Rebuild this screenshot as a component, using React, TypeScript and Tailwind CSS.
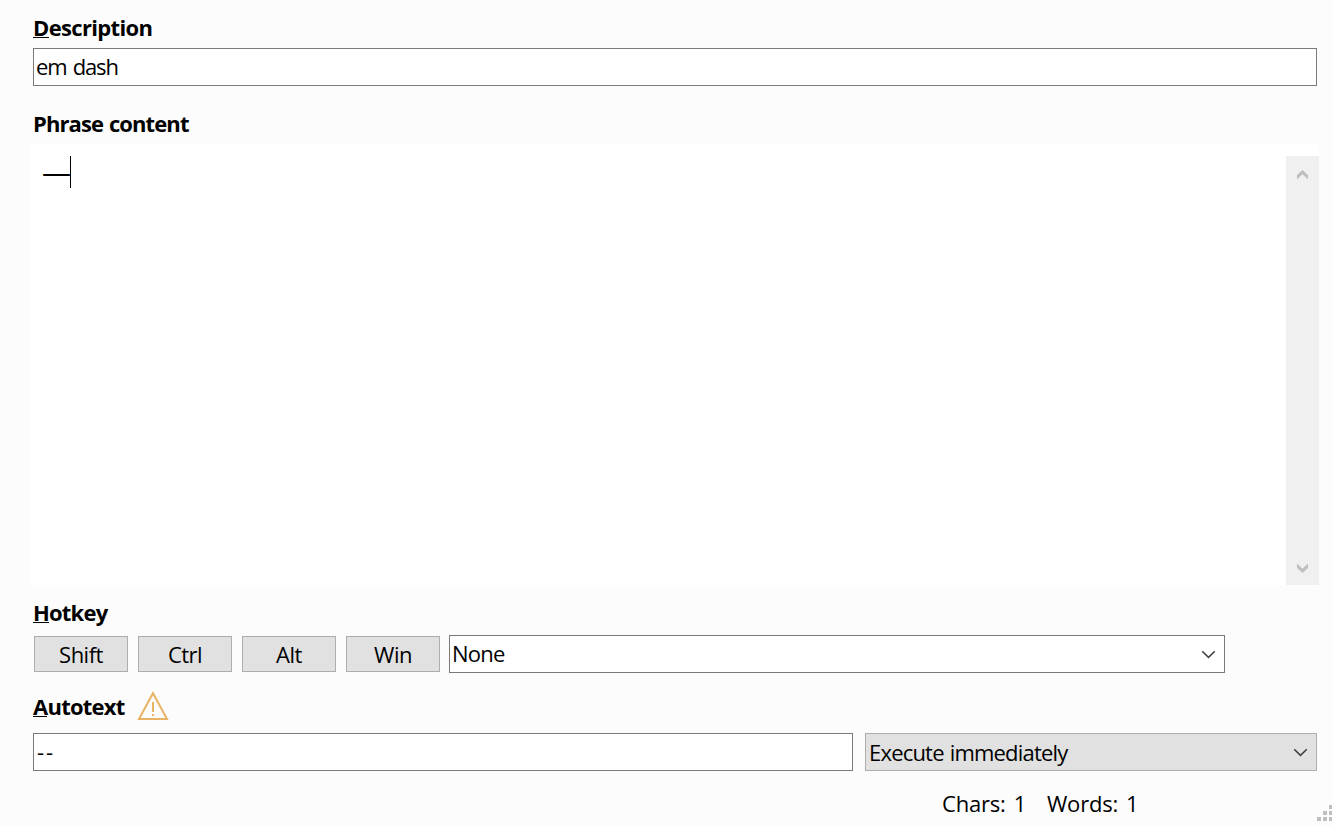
import React, { useState } from 'react';
import { clsx } from 'clsx';

interface FieldLabelProps {
  text: string;
  accessKey?: boolean;
  className?: string;
}

// Bold caption, optionally with its first letter underlined as the access key
function FieldLabel({ text, accessKey = false, className }: FieldLabelProps) {
  return (
    <span className={clsx('block h-[30px] text-[22px] leading-[30px] font-bold whitespace-nowrap', className)}>
      {accessKey ? (
        <>
          <span className="inline-block h-[26px] border-b border-black leading-[30px] align-top">{text[0]}</span>
          {text.slice(1)}
        </>
      ) : (
        text
      )}
    </span>
  );
}

function SelectArrow() {
  return (
    <svg className="h-[9px] w-[15px] flex-shrink-0" viewBox="0 0 15 9" fill="none" stroke="#404040" strokeWidth={1.5}>
      <path d="M1.2 1.2l6.3 6.2 6.3-6.2" />
    </svg>
  );
}

function ScrollArrow({ down = false }: { down?: boolean }) {
  return (
    <svg className={clsx('h-[9px] w-[11px]', down && 'rotate-180')} viewBox="0 0 11 9" fill="#bfbfbf">
      <path d="M5.5 0L11 5V9H10.5L5.5 4.2L0.5 9H0V5Z" />
    </svg>
  );
}

function WarningIcon() {
  return (
    <svg className="h-[30px] w-[32px]" viewBox="0 0 32 30" fill="none" stroke="#e8b464">
      <path d="M16 2.2L30 28H2Z" strokeWidth={2} />
      <path d="M16 11v10M16 23v2" strokeWidth={2} />
    </svg>
  );
}

function ResizeGrip() {
  return (
    <svg className="absolute right-0 top-[805px] h-[16px] w-[15px]" viewBox="0 0 15 16" fill="#bfbfbf">
      <path d="M12 0h4v4h-4zM6 6h4v4H6zM12 6h4v4h-4zM0 12h4v4H0zM6 12h4v4H6zM12 12h4v4h-4z" />
    </svg>
  );
}

const MODIFIERS = ['Shift', 'Ctrl', 'Alt', 'Win'];

export default function App() {
  const [active, setActive] = useState<string[]>([]);

  const toggle = (key: string) => {
    setActive(active.includes(key) ? active.filter((k) => k !== key) : [...active, key]);
  };

  return (
    <div className="relative flex h-[826px] w-[1332px] flex-col overflow-hidden bg-[#fcfcfc] font-['Open_Sans','Noto_Sans',sans-serif] text-[22px] leading-[30px] text-black">
      {/* Description */}
      <FieldLabel text="Description" accessKey className="mt-[12px] ml-[33px] tracking-[-0.65px]" />
      <div className="mt-[6px] mr-[15px] ml-[33px] flex h-[38px] items-center border border-[#7a7a7a] bg-white pb-[2px] pl-[2px]">
        <span className="tracking-[-1.1px] [word-spacing:1.5px]">em dash</span>
      </div>

      {/* Phrase content */}
      <FieldLabel text="Phrase content" className="mt-[22px] ml-[33px] tracking-[-0.9px] [word-spacing:1px]" />
      <div className="mt-[6px] mr-[13px] ml-[31px] flex h-[441px] bg-white pt-[12px]">
        <div className="flex flex-1 items-start pl-[11px]">
          <span className="w-[28px] text-[29px] leading-[31px]">—</span>
          <span className="h-[32px] w-px bg-black" />
        </div>
        <div className="flex w-[33px] flex-col items-center justify-between bg-[#f0f0f0] pt-[14px] pb-[12px]">
          <ScrollArrow />
          <ScrollArrow down />
        </div>
      </div>

      {/* Hotkey */}
      <FieldLabel text="Hotkey" accessKey className="mt-[12px] ml-[33px] tracking-[-0.8px]" />
      <div className="mt-[8px] ml-[34px] flex h-[38px] items-center">
        <div className="flex gap-[10px]">
          {MODIFIERS.map((key) => (
            <button
              key={key}
              onClick={() => toggle(key)}
              className={clsx(
                'h-[36px] w-[94px] border pt-px text-center leading-[33px] tracking-[-0.5px]',
                active.includes(key) ? 'border-[#0078d7] bg-[#cce4f7]' : 'border-[#adadad] bg-[#e1e1e1]'
              )}
            >
              {key}
            </button>
          ))}
        </div>
        <div className="ml-[9px] flex h-[38px] w-[776px] items-center justify-between border border-[#7a7a7a] bg-white pr-[8px] pl-[2px]">
          <span className="pb-[2px] tracking-[-0.8px]">None</span>
          <SelectArrow />
        </div>
      </div>

      {/* Autotext */}
      <div className="mt-[18px] ml-[33px] flex h-[32px] items-start">
        <FieldLabel text="Autotext" accessKey className="w-[104px] tracking-[-0.75px]" />
        <WarningIcon />
      </div>
      <div className="mt-[10px] mr-[15px] ml-[33px] flex gap-[12px]">
        <div className="flex h-[38px] w-[820px] items-center border border-[#7a7a7a] bg-white pb-[2px] pl-[3px]">
          <span className="tracking-[1.8px]">--</span>
        </div>
        <div className="flex h-[38px] flex-1 items-center justify-between border border-[#adadad] bg-[#e1e1e1] pr-[8px] pl-[3px]">
          <span className="tracking-[-0.8px] [word-spacing:1px]">Execute immediately</span>
          <SelectArrow />
        </div>
      </div>

      {/* Counters */}
      <div className="mt-[17px] ml-[942px] flex whitespace-nowrap tracking-[-0.2px] [word-spacing:2.5px]">
        <span className="w-[105px]">Chars: 1</span>
        <span>Words: 1</span>
      </div>
      <ResizeGrip />
    </div>
  );
}
